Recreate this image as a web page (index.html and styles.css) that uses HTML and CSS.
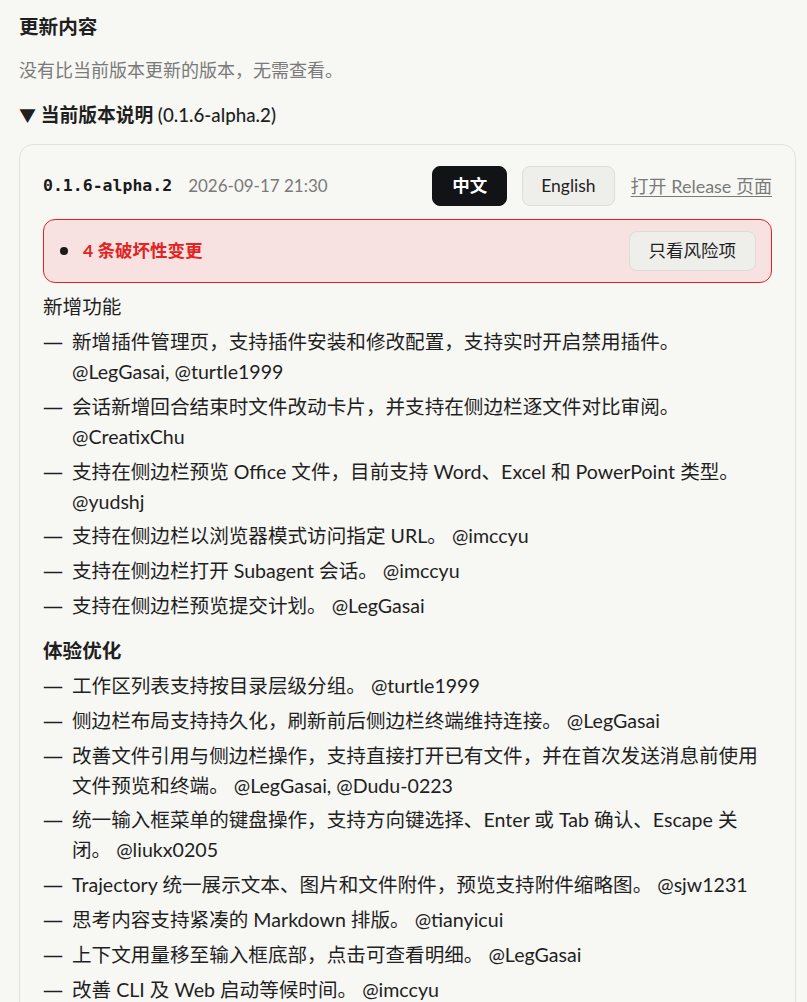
FILE: index.html
```html
<!DOCTYPE html>
<html lang="zh-CN">
<head>
<meta charset="utf-8">
<title>更新内容</title>
<link rel="stylesheet" href="styles.css">
</head>
<body>
<main class="page">
  <h2 class="title">更新内容</h2>
  <p class="desc">没有比当前版本更新的版本，无需查看。</p>
  <details class="current" open>
    <summary class="summary"><span class="tri">▼</span> <span class="sum-cn">当前版本说明</span> <span class="sum-ver">(0.1.6-alpha.2)</span></summary>
    <section class="card">
      <div class="meta-row">
        <code class="ver">0.1.6-alpha.2</code>
        <span class="date">2026-09-17 21:30</span>
        <div class="actions">
          <button class="btn btn-dark">中文</button>
          <button class="btn">English</button>
          <a class="link" href="#">打开 Release 页面</a>
        </div>
      </div>
      <div class="alert">
        <span class="dot"></span>
        <span class="alert-text">4 条破坏性变更</span>
        <button class="btn btn-risk">只看风险项</button>
      </div>
      <h3 class="group">新增功能</h3>
      <ul class="list">
        <li><span class="txt">新增插件管理页，支持插件安装和修改配置，支持实时开启禁用插件。 <span class="by">@LegGasai, @turtle1999</span></span></li>
        <li><span class="txt">会话新增回合结束时文件改动卡片，并支持在侧边栏逐文件对比审阅。 <span class="by">@CreatixChu</span></span></li>
        <li><span class="txt">支持在侧边栏预览 Office 文件，目前支持 Word、Excel 和 PowerPoint 类型。 <span class="by">@yudshj</span></span></li>
        <li><span class="txt">支持在侧边栏以浏览器模式访问指定 URL。 <span class="by">@imccyu</span></span></li>
        <li><span class="txt">支持在侧边栏打开 Subagent 会话。 <span class="by">@imccyu</span></span></li>
        <li><span class="txt">支持在侧边栏预览提交计划。 <span class="by">@LegGasai</span></span></li>
      </ul>
      <h3 class="group group-bold">体验优化</h3>
      <ul class="list">
        <li><span class="txt">工作区列表支持按目录层级分组。 <span class="by">@turtle1999</span></span></li>
        <li><span class="txt">侧边栏布局支持持久化，刷新前后侧边栏终端维持连接。 <span class="by">@LegGasai</span></span></li>
        <li><span class="txt">改善文件引用与侧边栏操作，支持直接打开已有文件，并在首次发送消息前使用文件预览和终端。 <span class="by">@LegGasai, @Dudu-0223</span></span></li>
        <li><span class="txt">统一输入框菜单的键盘操作，支持方向键选择、Enter 或 Tab 确认、Escape 关闭。 <span class="by">@liukx0205</span></span></li>
        <li><span class="txt">Trajectory 统一展示文本、图片和文件附件，预览支持附件缩略图。 <span class="by">@sjw1231</span></span></li>
        <li><span class="txt">思考内容支持紧凑的 Markdown 排版。 <span class="by">@tianyicui</span></span></li>
        <li><span class="txt">上下文用量移至输入框底部，点击可查看明细。 <span class="by">@LegGasai</span></span></li>
        <li><span class="txt">改善 CLI 及 Web 启动等候时间。 <span class="by">@imccyu</span></span></li>
      </ul>
    </section>
  </details>
</main>
</body>
</html>
```
FILE: styles.css
```css
html, body {
  margin: 0;
  padding: 0;
  background: #f7f7f4;
}
body {
  font-family: "Lato", "Noto Sans CJK SC", sans-serif;
  font-size: 19.6px;
  line-height: 30px;
  color: #1f1f1f;
}
.page {
  padding: 12px 11px 0 19px;
}
.title {
  margin: 0;
  font-size: 19.6px;
  line-height: 30px;
  font-weight: 700;
}
.desc {
  margin: 13px 0 0;
  font-size: 18px;
  line-height: 30px;
  color: #7a7a7a;
}
.current {
  margin-top: 15px;
}
.summary {
  display: block;
  list-style: none;
  cursor: pointer;
  font-size: 18.75px;
  line-height: 30px;
  font-weight: 600;
}
.summary::-webkit-details-marker { display: none; }
.tri { font-weight: 400; font-size: 17px; }
.sum-cn { font-weight: 700; }
.sum-ver { font-weight: 500; }
.card {
  margin-top: 13px;
  border: 1px solid #e1e1dd;
  border-radius: 14px;
  padding: 21px 23px 23px;
}
.meta-row {
  display: flex;
  align-items: center;
  height: 40px;
}
.ver {
  font-family: "DejaVu Sans Mono", monospace;
  font-weight: 700;
  font-size: 16.5px;
  color: #1a1a1a;
}
.date {
  margin-left: 16px;
  font-size: 17px;
  color: #7a7a7a;
}
.actions {
  margin-left: auto;
  display: flex;
  align-items: center;
  gap: 15px;
}
.btn {
  font-family: inherit;
  height: 40px;
  padding: 0 18px;
  font-size: 17.5px;
  line-height: 38px;
  border-radius: 8px;
  border: 1px solid #dcdcd8;
  background: #eeeeeb;
  color: #1f1f1f;
}
.btn-dark {
  background: #121316;
  border-color: #121316;
  color: #fff;
  font-weight: 700;
  padding: 0 19px;
}
.link {
  margin-left: 1px;
  font-size: 18px;
  color: #7a7a7a;
  text-decoration: underline;
  text-underline-offset: 3px;
}
.alert {
  margin-top: 13px;
  display: flex;
  align-items: center;
  padding: 11px 15px 11px 16px;
  background: #f7e2e1;
  border: 1px solid #e3221f;
  border-radius: 12px;
}
.dot {
  width: 8px;
  height: 8px;
  border-radius: 50%;
  background: #1a1a1a;
  flex-shrink: 0;
}
.alert-text {
  margin-left: 15px;
  font-size: 17.5px;
  font-weight: 700;
  color: #e2231f;
}
.btn-risk {
  margin-left: auto;
  padding: 0 19px;
}
.group {
  margin: 9px 0 0;
  font-size: 19.6px;
  line-height: 30px;
  font-weight: 400;
}
.group-bold {
  margin-top: 15px;
  font-weight: 700;
}
.list {
  list-style: none;
  margin: 5px 0 0;
  padding: 0;
}
.list li {
  display: flex;
  margin-bottom: 4.8px;
}
.list li::before {
  content: "—";
  font-family: "Open Sans", sans-serif;
  font-size: 20px;
  flex: 0 0 29px;
}
.by {
  white-space: nowrap;
}
```
